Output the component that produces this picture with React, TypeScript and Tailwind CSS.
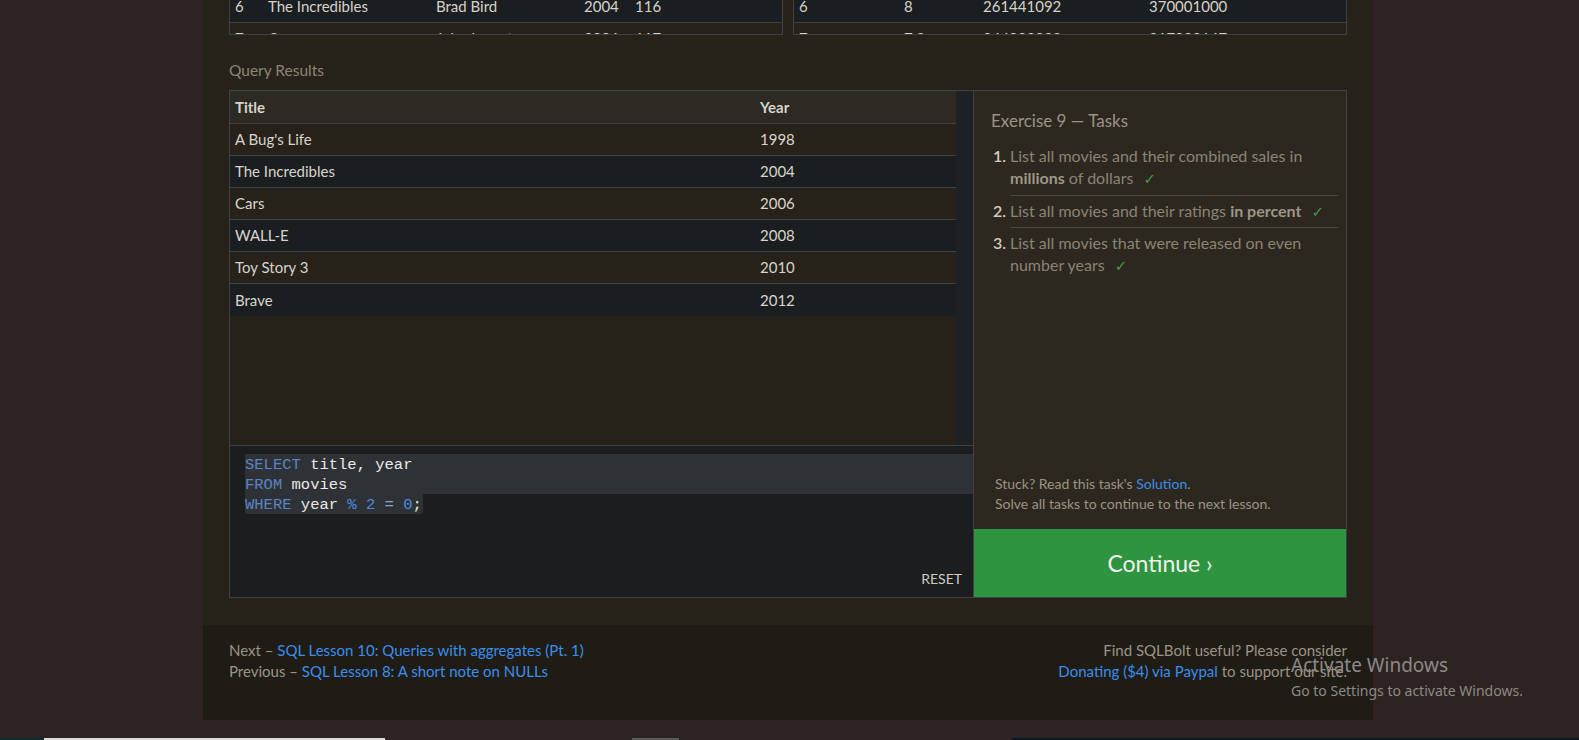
import React from "react";

const topMovies = [
  { id: 6, title: "The Incredibles", director: "Brad Bird", year: 2004, length: 116 },
  { id: 7, title: "Cars", director: "John Lasseter", year: 2006, length: 117 },
];

const topBox = [
  { id: 6, rating: "8", domestic: "261441092", intl: "370001000" },
  { id: 7, rating: "7.2", domestic: "244082982", intl: "217900167" },
];

const results = [
  { title: "A Bug's Life", year: 1998 },
  { title: "The Incredibles", year: 2004 },
  { title: "Cars", year: 2006 },
  { title: "WALL-E", year: 2008 },
  { title: "Toy Story 3", year: 2010 },
  { title: "Brave", year: 2012 },
];

function Check() {
  return <span className="ml-[10px] text-[#3f9a45] font-['DejaVu_Sans',sans-serif] text-[15px]">✓</span>;
}

function TopTables() {
  return (
    <div className="flex gap-[10px] text-[15px] leading-[21px] text-[#d6d2ca]">
      <div className="w-[554px] h-[35px] overflow-hidden border-x border-b border-[#3e4144]">
        {topMovies.map((m, i) => (
          <div
            key={m.id}
            className={
              "grid grid-cols-[33px_168px_148px_51px_1fr] h-[32px] border-b border-[#3e4144] " +
              (i === 0 ? "-mt-[9px] items-center bg-[#1b1e20]" : "items-start pt-[5px]")
            }
          >
            <span className="px-[5px]">{m.id}</span>
            <span className="px-[5px]">{m.title}</span>
            <span className="px-[5px]">{m.director}</span>
            <span className="px-[5px]">{m.year}</span>
            <span className="px-[5px]">{m.length}</span>
          </div>
        ))}
      </div>
      <div className="flex-1 h-[35px] overflow-hidden border-x border-b border-[#3e4144]">
        {topBox.map((b, i) => (
          <div
            key={b.id}
            className={
              "grid grid-cols-[105px_79px_166px_1fr] h-[32px] border-b border-[#3e4144] " +
              (i === 0 ? "-mt-[9px] items-center bg-[#1b1e20]" : "items-start pt-[5px]")
            }
          >
            <span className="px-[5px]">{b.id}</span>
            <span className="px-[5px]">{b.rating}</span>
            <span className="px-[5px]">{b.domestic}</span>
            <span className="px-[5px]">{b.intl}</span>
          </div>
        ))}
      </div>
    </div>
  );
}

function ResultsTable() {
  return (
    <div className="flex h-[354px]">
      <div className="flex-1 text-[15px] text-[#d8d4cc]">
        <div className="grid grid-cols-[525px_1fr] h-[33px] items-center bg-[#2c2a22] border-b border-[#3e4144] font-bold">
          <span className="px-[5px]">Title</span>
          <span className="px-[5px]">Year</span>
        </div>
        {results.map((r, i) => (
          <div
            key={r.title}
            className={
              "grid grid-cols-[525px_1fr] h-[32px] items-center " +
              (i % 2 === 1 ? "bg-[#1b1e20] " : "") +
              (i < results.length - 1 ? "border-b border-[#3e4144]" : "")
            }
          >
            <span className="px-[5px]">{r.title}</span>
            <span className="px-[5px]">{r.year}</span>
          </div>
        ))}
      </div>
      <div className="w-[17px] bg-[#1e2124]" />
    </div>
  );
}

function Editor() {
  return (
    <div className="flex-1 flex flex-col bg-[#1b1d1f] border-t border-[#3e4144] font-['Liberation_Mono',monospace] text-[15.5px] leading-[20px]">
      <div className="pt-[8px] pl-[15px]">
        <div className="bg-[#2e3236] pt-[1px] h-[20px]">
          <span className="text-[#5b84c6]">SELECT</span> <span className="text-[#ebe9e4]">title, year</span>
        </div>
        <div className="bg-[#2e3236] pt-[1px] h-[20px]">
          <span className="text-[#5b84c6]">FROM</span> <span className="text-[#ebe9e4]">movies</span>
        </div>
        <div className="h-[20px]">
          <span className="inline-block h-[20px] pt-[1px] bg-[#2e3236] rounded-b-[3px] pr-[1px]">
            <span className="text-[#5b84c6]">WHERE</span> <span className="text-[#ebe9e4]">year</span>{" "}
            <span className="text-[#4d8ae0]">%</span> <span className="text-[#4d8ae0]">2</span>{" "}
            <span className="text-[#8aa3c8]">=</span> <span className="text-[#4d8ae0]">0</span>
            <span className="text-[#ebe9e4]">;</span>
          </span>
        </div>
      </div>
      <div className="mt-auto self-end pr-[11px] pb-[8px] font-['Lato',sans-serif] text-[14px] text-[#cfcbc4]">
        RESET
      </div>
    </div>
  );
}

function Tasks() {
  return (
    <div className="w-[373px] flex flex-col bg-[#2c281f] border-l border-[#3e4144] font-['Lato',sans-serif]">
      <h3 className="pl-[17px] pt-[18px] text-[17px] leading-[24px] text-[#9b9384]">Exercise 9 — Tasks</h3>
      <ol className="list-decimal pl-[36px] pr-[8px] mt-[12px] text-[16px] leading-[22px] text-[#8b8374] marker:text-[#d2cabb] marker:font-semibold">
        <li className="pb-[5px] border-b border-[#47463f]">
          List all movies and their combined sales in <b className="text-[#9d9586]">millions</b> of dollars
          <Check />
        </li>
        <li className="py-[4px] border-b border-[#47463f]">
          List all movies and their ratings <b className="text-[#9d9586]">in percent</b>
          <Check />
        </li>
        <li className="pt-[4px]">
          List all movies that were released on even number years
          <Check />
        </li>
      </ol>
      <div className="mt-auto pl-[21px] pb-[15px] text-[14px] leading-[20px] text-[#9b9384]">
        <p>
          Stuck? Read this task's <a className="text-[#3b8eea]">Solution</a>.
        </p>
        <p>Solve all tasks to continue to the next lesson.</p>
      </div>
      <button className="h-[68px] bg-[#2e9440] text-[23px] text-[#eef3ec]">Continue ›</button>
    </div>
  );
}

export default function App() {
  return (
    <div className="relative h-[740px] overflow-hidden flex flex-col bg-[#2d2320] font-['Lato',sans-serif]">
      <div className="ml-[203px] w-[1170px] bg-[#262119] rounded-b-[3px]">
        <div className="px-[26px] pb-[27px]">
          <TopTables />
          <div className="mt-[25px] mb-[9px] text-[15.5px] leading-[21px] text-[#8e8676]">Query Results</div>
          <div className="flex h-[508px] border border-[#3e4144]">
            <div className="flex-1 flex flex-col">
              <ResultsTable />
              <Editor />
            </div>
            <Tasks />
          </div>
        </div>
        <div className="flex justify-between bg-[#1f1c16] px-[26px] pt-[15px] h-[95px] text-[15px] leading-[21px] text-[#9b9384]">
          <div>
            <p>
              Next – <a className="text-[#3b8eea]">SQL Lesson 10: Queries with aggregates (Pt. 1)</a>
            </p>
            <p>
              Previous – <a className="text-[#3b8eea]">SQL Lesson 8: A short note on NULLs</a>
            </p>
          </div>
          <div className="text-right">
            <p>Find SQLBolt useful? Please consider</p>
            <p>
              <a className="text-[#3b8eea]">Donating ($4) via Paypal</a> to support our site.
            </p>
          </div>
        </div>
      </div>
      <div className="flex-1" />
      <div className="flex h-[2px]">
        <div className="w-[44px] bg-[#0c2a33]" />
        <div className="w-[341px] bg-[#dcdcdc]" />
        <div className="w-[247px]" />
        <div className="w-[47px] bg-[#5a5a5a]" />
        <div className="w-[333px]" />
        <div className="flex-1 bg-[#0b1a28]" />
      </div>
      <div className="absolute left-[1291px] top-[652px] text-[#8d8988] font-['Noto_Sans',sans-serif]">
        <div className="text-[19px] leading-[26px]">Activate Windows</div>
        <div className="text-[14px] leading-[20px] mt-[3px]">Go to Settings to activate Windows.</div>
      </div>
    </div>
  );
}
